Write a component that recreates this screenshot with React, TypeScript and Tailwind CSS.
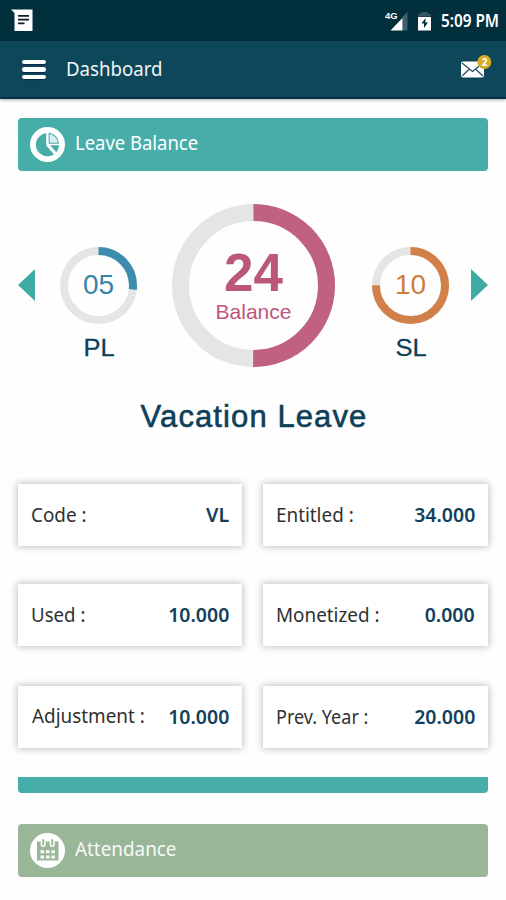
import React from "react";

const myriad = "font-['Noto_Sans',sans-serif]";
const arial = "font-['Liberation_Sans',Arial,sans-serif]";

function Ring({ size, stroke, percent, color, children }: {
  size: number;
  stroke: number;
  percent: number;
  color: string;
  children: React.ReactNode;
}) {
  const r = (size - stroke) / 2;
  const c = size / 2;
  const len = 2 * Math.PI * r;
  return (
    <div className="grid place-items-center">
      <svg width={size} height={size} className="col-start-1 row-start-1">
        <circle cx={c} cy={c} r={r} fill="none" stroke="#e5e5e5" strokeWidth={stroke} />
        <circle
          cx={c}
          cy={c}
          r={r}
          fill="none"
          stroke={color}
          strokeWidth={stroke}
          strokeDasharray={`${len * percent} ${len}`}
          transform={`rotate(-90 ${c} ${c})`}
        />
      </svg>
      <div className="col-start-1 row-start-1 flex flex-col items-center">{children}</div>
    </div>
  );
}

function Entry({ label, value, labelClass, valueClass }: {
  label: string;
  value: string;
  labelClass: string;
  valueClass: string;
}) {
  return (
    <div className="flex h-[61.500px] items-center justify-between self-start bg-white px-[13px] shadow-[0_0_7px_1px_rgba(0,0,0,0.24)]">
      <span className={`origin-left whitespace-nowrap text-[20.5px] text-[#303030] ${labelClass}`}>{label}</span>
      <span className={`origin-right whitespace-nowrap text-[20.5px] font-semibold text-[#123f5c] ${valueClass}`}>{value}</span>
    </div>
  );
}

export default function App() {
  return (
    <div className={`h-[900px] w-[506px] overflow-hidden bg-[#fefefe] ${myriad}`}>
      <div className="flex h-[41px] items-center justify-between bg-[#022f3c] pr-[7px] pl-[11px]">
        <svg width="24" height="24" viewBox="0 0 24 24">
          <path d="M0 0.500H21.500V22H3.500V4Z" fill="#fff" />
          <path d="M7 6.800H18M7 10.600H18M7 14.300H13.500" stroke="#111c24" strokeWidth="1.800" />
        </svg>
        <div className="flex items-center">
          <svg width="24" height="24" viewBox="0 0 24 24">
            <path d="M17.500 8L22.500 3V21.500H17.500Z" fill="#3c616c" />
            <path d="M5.500 21.500L17.500 9V21.500Z" fill="#fff" />
            <text x="0" y="9.500" fontSize="9.500" fontWeight="700" fill="#fff" textLength="12.500" lengthAdjust="spacingAndGlyphs" fontFamily="Liberation Sans, sans-serif">4G</text>
          </svg>
          <svg width="14" height="20" viewBox="0 0 14 20" className="ml-[9px]">
            <path d="M0 5.500V3L3 2.500V1H10V2.500L13 3V5.500Z" fill="#31545f" />
            <path d="M0 6H13V19.500H0Z" fill="#fff" />
            <path d="M7.500 7L3.500 12.500H6V17L10 11.500H7.500Z" fill="#07303d" />
          </svg>
          <span className="mt-px ml-[9px] w-[58px] origin-left scale-x-[0.9] whitespace-nowrap text-[17px] leading-[24px] font-semibold text-white">5:09 PM</span>
        </div>
      </div>

      <div className="flex h-[57.500px] items-center border-b-2 border-[#073247] bg-[#0e475a] pr-[14px] pl-[22px] shadow-[0_1px_3px_rgba(0,0,0,0.35)]">
        <div className="mt-px flex flex-col gap-[3px]">
          <div className="h-[4.500px] w-[23.500px] rounded-full bg-white shadow-[0_1px_1px_#082544]" />
          <div className="h-[4.500px] w-[23.500px] rounded-full bg-white shadow-[0_1px_1px_#082544]" />
          <div className="h-[4.500px] w-[23.500px] rounded-full bg-white shadow-[0_1px_1px_#082544]" />
        </div>
        <span className="ml-[20px] origin-left scale-x-[0.91] text-[20.5px] text-[#f1f5f7]">Dashboard</span>
        <svg width="32" height="26" viewBox="0 0 32 26" className="mb-[4px] ml-auto">
          <rect x="1" y="7.500" width="23" height="16" rx="2" fill="#fff" />
          <path d="M2 9L12.500 17.500L23 9M2 22L9.500 15.100M23 22L15.500 15.100" fill="none" stroke="#294e60" strokeWidth="1.300" />
          <circle cx="24.300" cy="8" r="7" fill="#d9ab24" />
          <text x="24.500" y="11.700" fontSize="10" fontWeight="700" fill="#fff" textAnchor="middle" fontFamily="Noto Sans, sans-serif">2</text>
        </svg>
      </div>

      <main className="px-[18px] pt-[19.500px]">
        <div className="flex h-[53px] items-center rounded-[4px] bg-[#46ada9] pl-[12px]">
          <svg width="36" height="36" viewBox="0 0 36 36">
            <circle cx="17.500" cy="17.500" r="17.500" fill="#fff" />
            <path d="M16.200 6.200A11.600 11.600 0 1 0 24 27.300L16.200 18.500Z" fill="#46ada9" />
            <path d="M19.200 6.200A11.500 11.500 0 0 1 28.500 16.300H19.200Z" fill="#d9efee" stroke="#46ada9" strokeWidth="1.100" />
            <path d="M20 18.200H29A11.500 11.500 0 0 1 26.300 25.300Z" fill="#46ada9" />
          </svg>
          <span className="mb-[4px] ml-[9px] origin-left scale-x-[0.9] text-[20.5px] text-white">Leave Balance</span>
        </div>

        <section className="mt-[33px] grid h-[163px] grid-cols-[154px_163px_1fr]">
          <div className="flex gap-[25px]">
            <svg width="17" height="32" viewBox="0 0 17 32" className="mt-[65px]"><path d="M17 0V32L0 16Z" fill="#3eaba4" /></svg>
            <div className="mt-[42.500px] flex flex-col items-center">
              <Ring size={77} stroke={8} percent={0.268} color="#3d8cae">
                <span className={`text-[28px] leading-[32px] text-[#3684a8] ${arial}`}>05</span>
              </Ring>
              <span className={`mt-[9px] scale-x-[1.04] text-[24.5px] leading-[30px] text-[#0e3f58] [-webkit-text-stroke:0.3px_#0e3f58] ${arial}`}>PL</span>
            </div>
          </div>
          <Ring size={163} stroke={17} percent={0.5} color="#c06082">
            <span className={`text-[53px] leading-[52px] font-bold text-[#bb5779] ${arial}`}>24</span>
            <span className={`text-[21px] leading-[25px] text-[#c0567e] ${arial}`}>Balance</span>
          </Ring>
          <div className="flex justify-end gap-[22px]">
            <div className="mt-[42.500px] flex flex-col items-center">
              <Ring size={77} stroke={8} percent={0.75} color="#d2804a">
                <span className={`text-[28px] leading-[32px] text-[#cf7c3c] ${arial}`}>10</span>
              </Ring>
              <span className={`mt-[9px] scale-x-[1.04] text-[24.5px] leading-[30px] text-[#0e3f58] [-webkit-text-stroke:0.3px_#0e3f58] ${arial}`}>SL</span>
            </div>
            <svg width="17" height="32" viewBox="0 0 17 32" className="mt-[65px]"><path d="M0 0V32L17 16Z" fill="#3eaba4" /></svg>
          </div>
        </section>

        <h1 className={`mt-[31px] pl-[2px] text-center text-[31px] leading-[38px] tracking-[1.1px] text-[#0e3f58] [-webkit-text-stroke:0.6px_#0e3f58] ${arial}`}>Vacation Leave</h1>

        <section className="mt-[48px] grid grid-cols-[224px_225px] grid-rows-[61px_63px_62px] gap-x-[21px] gap-y-[39px]">
          <Entry label="Code :" value="VL" labelClass="scale-x-[0.92]" valueClass="scale-x-[0.96]" />
          <Entry label="Entitled :" value="34.000" labelClass="scale-x-[0.92]" valueClass="scale-x-[0.95]" />
          <Entry label="Used :" value="10.000" labelClass="scale-x-[0.91]" valueClass="scale-x-[0.95]" />
          <Entry label="Monetized :" value="0.000" labelClass="scale-x-[0.92]" valueClass="scale-x-[0.95]" />
          <Entry label="Adjustment :" value="10.000" labelClass="mb-[2px] ml-px scale-x-[0.92]" valueClass="scale-x-[0.95]" />
          <Entry label="Prev. Year :" value="20.000" labelClass="scale-x-[0.88]" valueClass="scale-x-[0.95]" />
        </section>

        <div className="mt-[29px] h-[16px] rounded-b-[4px] bg-[#46ada9]" />

        <div className="mt-[31px] flex h-[53px] items-center rounded-[4px] bg-[#9ab699] pl-[12px]">
          <svg width="36" height="36" viewBox="0 0 36 36">
            <circle cx="17.500" cy="17.500" r="17.500" fill="#fff" />
            <path d="M7 8.500H28.500V27.500H7Z" fill="#9ab699" />
            <path d="M13.200 8V11.500M22.200 8V11.500" stroke="#fff" strokeWidth="5" strokeLinecap="round" />
            <path d="M13.200 7V11.500M22.200 7V11.500" stroke="#9ab699" strokeWidth="2" strokeLinecap="round" />
            <path d="M10.500 18.700H24.900M10.500 24H24.900" stroke="#fff" strokeWidth="3" strokeDasharray="3.600 1.800" />
          </svg>
          <span className="mb-[4px] ml-[9px] origin-left scale-x-[0.92] text-[20.5px] text-[#f7faf6]">Attendance</span>
        </div>
      </main>
    </div>
  );
}
